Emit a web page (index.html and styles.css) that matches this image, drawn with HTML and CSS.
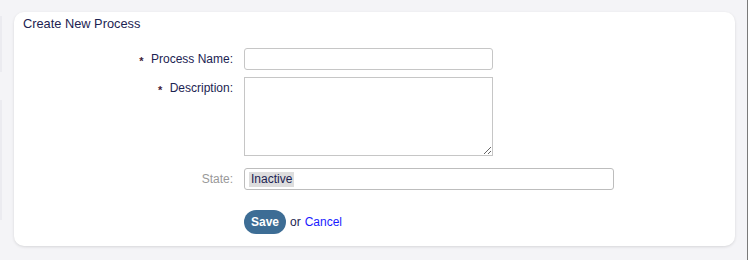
FILE: index.html
```html
<!DOCTYPE html>
<html lang="en">
<head>
  <meta charset="UTF-8">
  <title>Create New Process</title>
  <link rel="stylesheet" href="styles.css">
</head>
<body>

<div class="page">
  <div class="side">
    <div class="side-edge top"></div>
    <div class="side-edge bottom"></div>
  </div>

  <div class="card">
    <h2 class="card-title">Create New Process</h2>

    <form class="form">
      <div class="row">
        <label class="label" for="name"><span class="req">*</span> Process Name:</label>
        <input type="text" id="name" class="field input">
      </div>

      <div class="row">
        <label class="label" for="desc"><span class="req">*</span> Description:</label>
        <textarea id="desc" class="field textarea"></textarea>
      </div>

      <div class="row row-state">
        <label class="label muted">State:</label>
        <div class="field select">
          <span class="tag">Inactive</span>
        </div>
      </div>

      <div class="actions">
        <button type="button" class="btn-save">Save</button>
        <span class="or">or</span>
        <a href="#" class="cancel">Cancel</a>
      </div>
    </form>
  </div>

  <div class="scroll-edge"></div>
</div>

</body>
</html>
```

FILE: styles.css
```css
html, body {
  margin: 0;
  padding: 0;
}
body {
  font-family: "Liberation Sans", Arial, sans-serif;
  font-size: 12px;
  background: #f4f4f7;
  color: #1c2352;
  width: 748px;
  height: 260px;
  overflow: hidden;
}
.page {
  display: flex;
  height: 260px;
}
.side {
  width: 2px;
  display: flex;
  flex-direction: column;
  padding-top: 16px;
}
.side-edge {
  background: #ebebf0;
  width: 2px;
}
.side-edge.top {
  height: 56px;
}
.side-edge.bottom {
  height: 120px;
  margin-top: 28px;
}
.card {
  margin: 12px 0 0 12px;
  width: 721px;
  height: 234px;
  box-sizing: border-box;
  background: #fff;
  border-radius: 10px;
  box-shadow: 0 1px 3px rgba(0, 0, 0, 0.12);
  padding: 5px 9px 0 9px;
}
.card-title {
  margin: 0;
  font-size: 12.8px;
  font-weight: normal;
  line-height: 14px;
  color: #1c2352;
}
.form {
  margin-top: 17px;
}
.row {
  display: flex;
  align-items: flex-start;
  margin-bottom: 7px;
}
.row-state {
  margin-top: 12px;
}
.label {
  width: 210px;
  flex: none;
  text-align: right;
  padding-top: 4px;
  line-height: 14px;
  margin-right: 11px;
}
.req {
  color: #3f1a38;
  font-weight: bold;
  font-size: 11px;
  vertical-align: -2px;
  margin-right: 4px;
}
.muted {
  color: #999;
}
.field {
  box-sizing: border-box;
  border: 1px solid #c6c6c6;
  background: #fff;
  font-family: inherit;
  font-size: 12px;
  margin: 0;
}
.input {
  width: 249px;
  height: 22px;
  border-radius: 3px;
  padding: 2px 4px;
}
.textarea {
  width: 249px;
  height: 79px;
  border-radius: 0;
  resize: both;
  padding: 2px 4px;
}
.select {
  width: 370px;
  height: 22px;
  border-radius: 3px;
  border-color: #bdbdbd;
  padding: 3px 4px;
  display: flex;
  align-items: center;
}
.tag {
  background: #dddddd;
  color: #1c2352;
  line-height: 15px;
  padding: 0 2px;
}
.actions {
  display: flex;
  align-items: center;
  margin-left: 221px;
  margin-top: 20px;
}
.btn-save {
  background: #3d6d95;
  color: #fff;
  font-family: inherit;
  font-weight: bold;
  font-size: 12px;
  border: none;
  border-radius: 12px;
  height: 24px;
  width: 42px;
  padding: 0;
  cursor: pointer;
}
.or {
  margin-left: 4px;
  color: #1c2352;
}
.cancel {
  margin-left: 4px;
  color: #1a1aff;
  text-decoration: none;
}
.scroll-edge {
  margin-left: auto;
  width: 1px;
  background: #7a7a7a;
}
```
